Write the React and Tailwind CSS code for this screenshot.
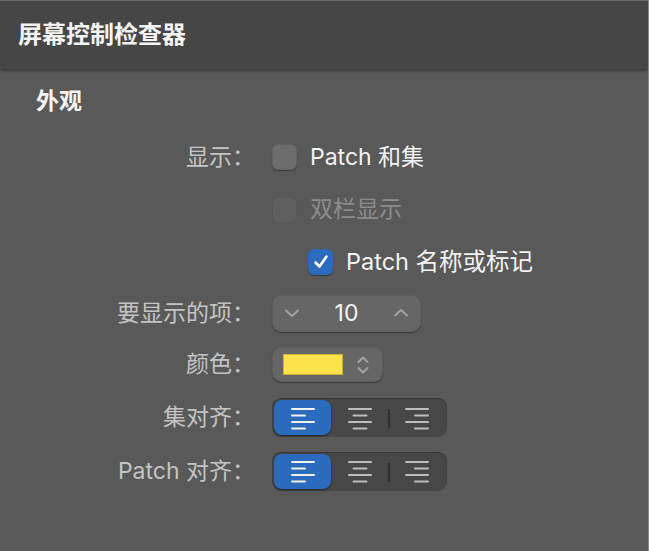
import React from 'react';

const FONT = { fontFamily: '"Inter", "Noto Sans CJK SC", sans-serif' };

const AlignIcon = ({ align }) => {
  const long = 24;
  const short = 15;
  const widths = [long, short, long, short];
  return (
    <svg width="26" height="24" viewBox="0 0 26 24">
      {widths.map((w, i) => {
        const x = align === 'left' ? 1 : align === 'right' ? 25 - w : (26 - w) / 2;
        return <rect key={i} x={x} y={2 + i * 6.5} width={w} height="2" rx="1" fill="currentColor" />;
      })}
    </svg>
  );
};

const Segmented = () => (
  <div className="relative grid grid-cols-3 w-[175px] h-[39px] p-[2px] rounded-[9px] bg-[#474747] shadow-[inset_0_1px_1px_rgba(0,0,0,0.25)]">
    <div className="flex items-center justify-center rounded-[8px] bg-[#2a6bbd] text-[#f2f2f2] shadow-[0_1px_2px_rgba(0,0,0,0.5)]">
      <AlignIcon align="left" />
    </div>
    <div className="flex items-center justify-center text-[#bdbdbd]">
      <AlignIcon align="center" />
    </div>
    <div className="relative flex items-center justify-center text-[#bdbdbd]">
      <div className="absolute left-0 top-[9px] w-[1.5px] h-[19px] bg-[#2e2e2e]" />
      <AlignIcon align="right" />
    </div>
  </div>
);

const Checkbox = ({ checked, disabled }) => (
  <div
    className={
      checked
        ? 'w-[25px] h-[26px] rounded-[6px] bg-[#2a6bbd] flex items-center justify-center shadow-[0_1px_1px_rgba(0,0,0,0.4)]'
        : disabled
        ? 'w-[25px] h-[26px] rounded-[6px] bg-[#5f5f5f] border border-[#575757]'
        : 'w-[25px] h-[26px] rounded-[6px] bg-[#6d6d6d] border border-[#636363] shadow-[0_1px_1px_rgba(0,0,0,0.35)]'
    }
  >
    {checked && (
      <svg width="18" height="18" viewBox="0 0 18 18">
        <path d="M3.5 9.5 L7.5 13.5 L14.5 3.5" fill="none" stroke="white" strokeWidth="2.6" strokeLinecap="round" strokeLinejoin="round" />
      </svg>
    )}
  </div>
);

const Row = ({ label, h, children }) => (
  <div className={`flex items-center ${h}`}>
    <div className="w-[255px] shrink-0 text-right text-[23px] text-[#c4c4c4] whitespace-nowrap">{label}</div>
    <div className="ml-[17px] flex items-center">{children}</div>
  </div>
);

export default function App() {
  return (
    <div style={FONT} className="w-[649px] h-[551px] bg-[#595959] border-r border-[#8a8a8a] overflow-hidden">
      <div className="h-[69px] border-t border-[#6a6a6a] bg-[#464646] flex items-center pl-[18px] shadow-[0_2px_3px_rgba(0,0,0,0.35)]">
        <h1 className="text-[24px] font-bold text-[#f4f4f4]">屏幕控制检查器</h1>
      </div>
      <div className="h-[62px] flex items-center pl-[36px] pt-[2px]">
        <h2 className="text-[23px] font-bold text-[#f4f4f4]">外观</h2>
      </div>

      <Row label="显示：" h="h-[52px]">
        <Checkbox />
        <span className="ml-[13px] text-[23px] text-[#f4f4f4]">Patch 和集</span>
      </Row>
      <Row label="" h="h-[53px]">
        <Checkbox disabled />
        <span className="ml-[13px] text-[23px] text-[#8c8c8c]">双栏显示</span>
      </Row>
      <Row label="" h="h-[52px]">
        <div className="ml-[36px] flex items-center">
          <Checkbox checked />
          <span className="ml-[13px] text-[23.5px] text-[#f4f4f4]">Patch 名称或标记</span>
        </div>
      </Row>

      <Row label="要显示的项：" h="h-[50px]">
        <div className="w-[149px] h-[37px] rounded-[9px] bg-[#666666] border border-[#5e5e5e] shadow-[0_1px_1px_rgba(0,0,0,0.35)] flex items-center justify-between px-[10px]">
          <svg width="18" height="18" viewBox="0 0 18 18">
            <path d="M3 6.5 L9 12 L15 6.5" fill="none" stroke="#a3a3a3" strokeWidth="2" strokeLinecap="round" strokeLinejoin="round" />
          </svg>
          <span className="text-[23px] text-[#f4f4f4]">10</span>
          <svg width="18" height="18" viewBox="0 0 18 18">
            <path d="M3 11.5 L9 6 L15 11.5" fill="none" stroke="#a3a3a3" strokeWidth="2" strokeLinecap="round" strokeLinejoin="round" />
          </svg>
        </div>
      </Row>

      <Row label="颜色：" h="h-[53px]">
        <div className="w-[111px] h-[35px] rounded-[9px] bg-[#666666] border border-[#5e5e5e] shadow-[0_1px_1px_rgba(0,0,0,0.35)] flex items-center pl-[10px]">
          <div className="w-[60px] h-[21px] bg-[#fde34b] border border-[#c9b43a]" />
          <svg className="ml-[13px]" width="14" height="22" viewBox="0 0 14 22">
            <path d="M2.5 8 L7 3.5 L11.5 8" fill="none" stroke="#a3a3a3" strokeWidth="2" strokeLinecap="round" strokeLinejoin="round" />
            <path d="M2.5 14 L7 18.5 L11.5 14" fill="none" stroke="#a3a3a3" strokeWidth="2" strokeLinecap="round" strokeLinejoin="round" />
          </svg>
        </div>
      </Row>

      <Row label="集对齐：" h="h-[53px]">
        <Segmented />
      </Row>
      <Row label="Patch 对齐：" h="h-[54px]">
        <Segmented />
      </Row>
    </div>
  );
}
